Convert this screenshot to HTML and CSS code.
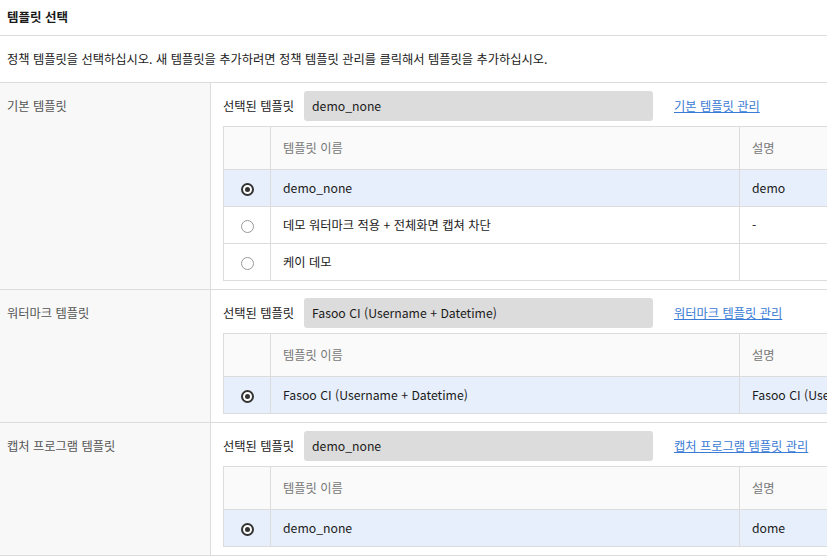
FILE: index.html
```html
<!DOCTYPE html>
<html lang="ko">
<head>
    <meta charset="UTF-8">
    <meta name="viewport" content="width=device-width, initial-scale=1.0">
    <title>템플릿 선택</title>
    <link rel="stylesheet" href="styles.css">
</head>
<body>
    <div class="panel">
        <div class="panel-title">템플릿 선택</div>
        <div class="panel-desc">정책 템플릿을 선택하십시오. 새 템플릿을 추가하려면 정책 템플릿 관리를 클릭해서 템플릿을 추가하십시오.</div>

        <div class="tpl-section">
            <div class="tpl-label">기본 템플릿</div>
            <div class="tpl-body">
                <div class="tpl-selected">
                    <span class="sel-label">선택된 템플릿</span>
                    <div class="sel-input">demo_none</div>
                    <a href="#" class="sel-link">기본 템플릿 관리</a>
                </div>
                <table class="tpl-table">
                    <thead>
                        <tr><th class="col-radio"></th><th class="col-name">템플릿 이름</th><th class="col-desc">설명</th></tr>
                    </thead>
                    <tbody>
                        <tr class="active"><td class="col-radio"><span class="radio checked"></span></td><td>demo_none</td><td>demo</td></tr>
                        <tr><td class="col-radio"><span class="radio"></span></td><td>데모 워터마크 적용 + 전체화면 캡쳐 차단</td><td>-</td></tr>
                        <tr><td class="col-radio"><span class="radio"></span></td><td>케이 데모</td><td></td></tr>
                    </tbody>
                </table>
            </div>
        </div>

        <div class="tpl-section">
            <div class="tpl-label">워터마크 템플릿</div>
            <div class="tpl-body">
                <div class="tpl-selected">
                    <span class="sel-label">선택된 템플릿</span>
                    <div class="sel-input">Fasoo CI (Username + Datetime)</div>
                    <a href="#" class="sel-link">워터마크 템플릿 관리</a>
                </div>
                <table class="tpl-table">
                    <thead>
                        <tr><th class="col-radio"></th><th class="col-name">템플릿 이름</th><th class="col-desc">설명</th></tr>
                    </thead>
                    <tbody>
                        <tr class="active"><td class="col-radio"><span class="radio checked"></span></td><td>Fasoo CI (Username + Datetime)</td><td>Fasoo CI (Username + Datetime)</td></tr>
                    </tbody>
                </table>
            </div>
        </div>

        <div class="tpl-section">
            <div class="tpl-label">캡처 프로그램 템플릿</div>
            <div class="tpl-body">
                <div class="tpl-selected">
                    <span class="sel-label">선택된 템플릿</span>
                    <div class="sel-input">demo_none</div>
                    <a href="#" class="sel-link">캡처 프로그램 템플릿 관리</a>
                </div>
                <table class="tpl-table">
                    <thead>
                        <tr><th class="col-radio"></th><th class="col-name">템플릿 이름</th><th class="col-desc">설명</th></tr>
                    </thead>
                    <tbody>
                        <tr class="active"><td class="col-radio"><span class="radio checked"></span></td><td>demo_none</td><td>dome</td></tr>
                    </tbody>
                </table>
            </div>
        </div>
    </div>
</body>
</html>
```

FILE: styles.css
```css
html, body {
    overflow: hidden;
}
body {
    margin: 0;
    font-family: "Noto Sans CJK KR", "Noto Sans", sans-serif;
    font-size: 12.25px;
    color: #1a1a1a;
    background-color: #fff;
}
.panel {
    width: 960px;
}
.panel-title {
    height: 35px;
    line-height: 33px;
    padding-left: 7px;
    font-size: 12.5px;
    font-weight: bold;
    border-bottom: 1px solid #dcdcdc;
}
.panel-desc {
    height: 46px;
    line-height: 46px;
    padding-left: 7px;
    border-bottom: 1px solid #dcdcdc;
}
.tpl-section {
    display: flex;
    border-bottom: 1px solid #dcdcdc;
}
.tpl-label {
    width: 203px;
    flex-shrink: 0;
    padding: 14px 0 0 7px;
    color: #555;
    background-color: #f8f8f8;
    border-right: 1px solid #dcdcdc;
}
.tpl-body {
    padding: 8px 0 8px 12px;
}
.tpl-selected {
    display: flex;
    align-items: center;
    margin-bottom: 5px;
}
.sel-label {
    width: 81px;
}
.sel-input {
    width: 341px;
    height: 30px;
    line-height: 30px;
    padding-left: 8px;
    background-color: #dcdcdc;
    border-radius: 3px;
}
.sel-link {
    margin-left: 21px;
    color: #3a7bd5;
    text-decoration: underline;
}
.tpl-table {
    border-collapse: collapse;
    table-layout: fixed;
    width: 716px;
    border: 1px solid #dcdcdc;
}
.tpl-table th,
.tpl-table td {
    padding: 0 12px;
    text-align: left;
    border: 1px solid #dcdcdc;
    white-space: nowrap;
    overflow: hidden;
}
.tpl-table th {
    height: 42px;
    font-weight: normal;
    color: #777;
    background-color: #fafafa;
}
.tpl-table td {
    height: 36px;
}
.tpl-table .col-radio {
    width: 46px;
    padding: 0;
    text-align: center;
}
.tpl-table .col-name {
    width: 444px;
}
.tpl-table tr.active td {
    background-color: #e6effb;
}
.radio {
    display: inline-block;
    box-sizing: border-box;
    width: 13px;
    height: 13px;
    border: 1.5px solid #999;
    border-radius: 50%;
    vertical-align: middle;
    position: relative;
    background-color: #fff;
}
.radio.checked {
    border: 2px solid #333;
}
.radio.checked::after {
    content: '';
    position: absolute;
    left: 50%;
    top: 50%;
    width: 5px;
    height: 5px;
    margin: -2.5px 0 0 -2.5px;
    border-radius: 50%;
    background-color: #333;
}
```
